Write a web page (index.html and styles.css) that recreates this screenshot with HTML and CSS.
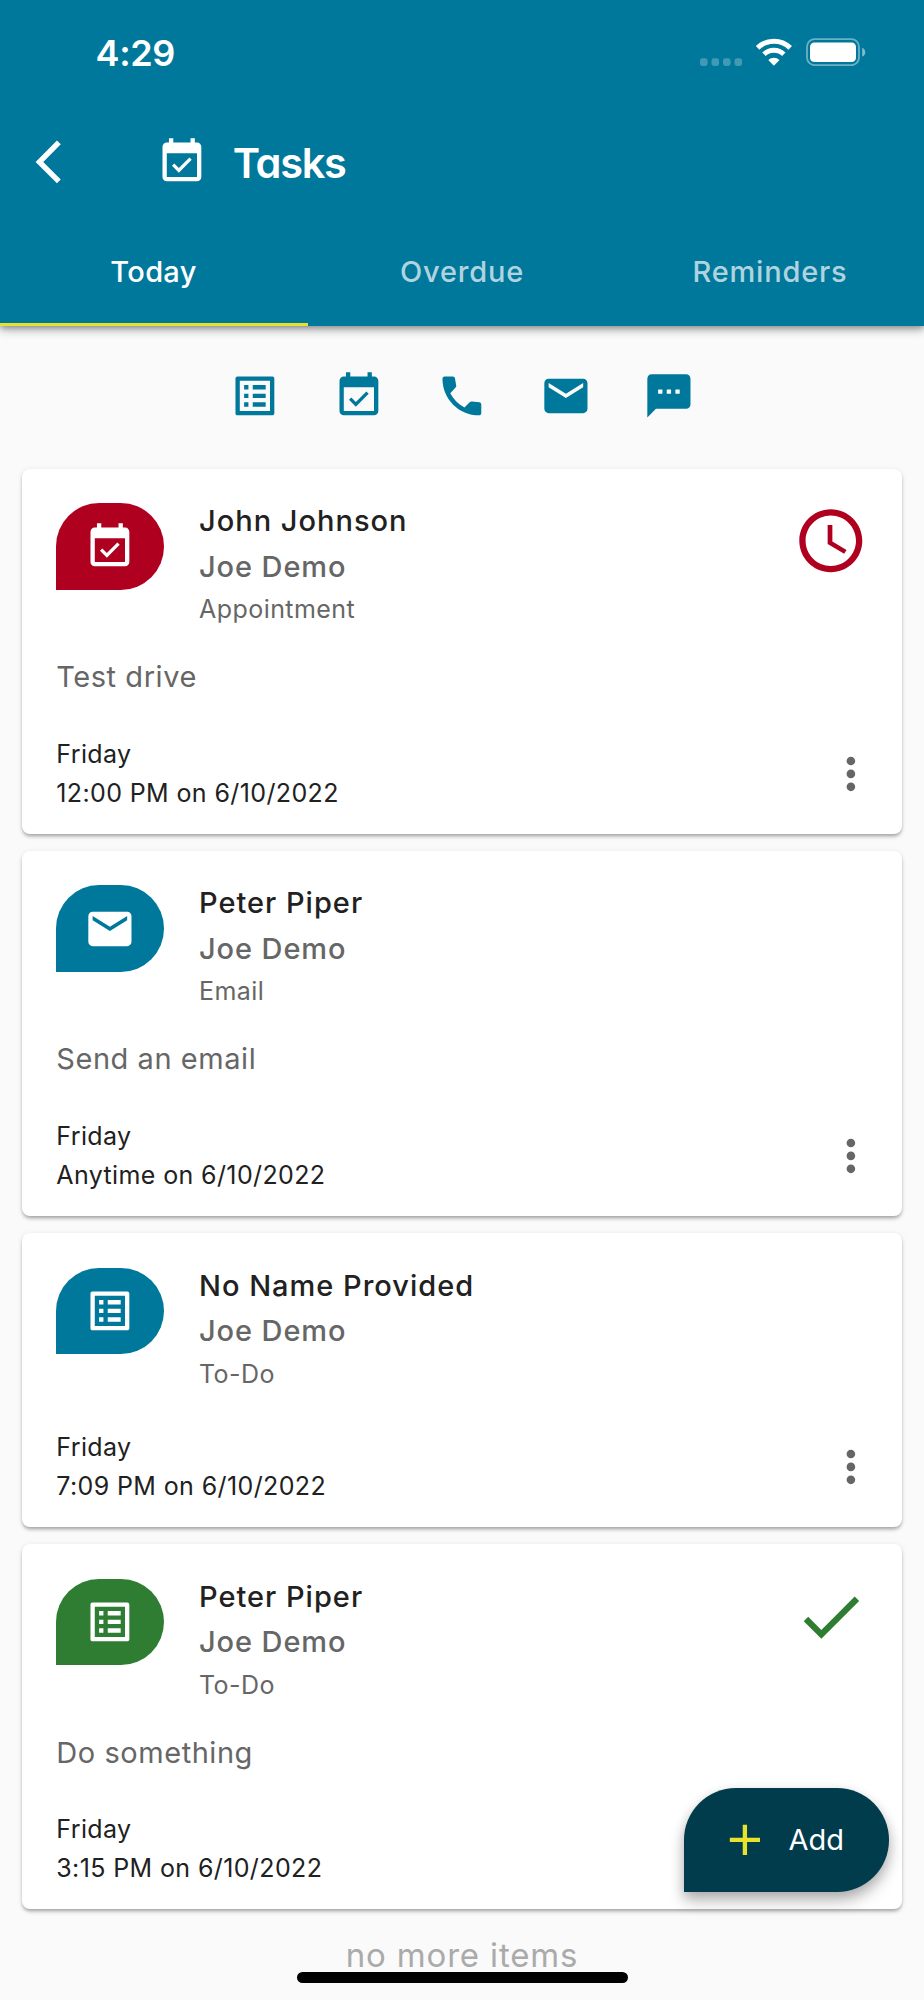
FILE: index.html
```html
<!DOCTYPE html>
<html lang="en">
<head>
<meta charset="utf-8">
<title>Tasks</title>
<link rel="stylesheet" href="styles.css">
</head>
<body>
<svg class="sprite" aria-hidden="true">
  <symbol id="i-event" viewBox="0 0 24 24"><path d="M16.53 11.06L15.47 10l-4.88 4.88-2.12-2.12-1.06 1.06L10.59 17l5.94-5.94zM19 3h-1V1h-2v2H8V1H6v2H5c-1.11 0-1.99.9-1.99 2L3 19c0 1.1.89 2 2 2h14c1.1 0 2-.9 2-2V5c0-1.1-.9-2-2-2zm0 16H5V8h14v11z"/></symbol>
  <symbol id="i-list" viewBox="0 0 24 24"><path d="M19 5v14H5V5h14m1.1-2H3.9c-.5 0-.9.4-.9.9v16.2c0 .4.4.9.9.9h16.2c.4 0 .9-.5.9-.9V3.9c0-.5-.5-.9-.9-.9zM11 7h6v2h-6V7zm0 4h6v2h-6v-2zm0 4h6v2h-6zM7 7h2v2H7zm0 4h2v2H7zm0 4h2v2H7z"/></symbol>
  <symbol id="i-phone" viewBox="0 0 24 24"><path d="M3.99 3H7.8c.5 0 .9.35.97.84l.6 3.3c.06.35-.05.7-.3.95L6.62 10.79c1.44 2.83 3.76 5.14 6.59 6.59l2.5-2.5c.25-.25.6-.36.95-.3l3.45.4c.5.07.87.5.87 1V20c0 .55-.45 1-1 1C10.6 21 3 13.39 3 4c0-.55.45-1 .99-1z"/></symbol>
  <symbol id="i-mail" viewBox="0 0 24 24"><path d="M20 4H4c-1.1 0-1.99.9-1.99 2L2 18c0 1.1.9 2 2 2h16c1.1 0 2-.9 2-2V6c0-1.1-.9-2-2-2zm0 4l-8 5-8-5V6l8 5 8-5v2z"/></symbol>
  <symbol id="i-sms" viewBox="0 0 24 24"><path d="M20 2H4c-1.1 0-1.99.9-1.99 2L2 22l4-4h14c1.1 0 2-.9 2-2V4c0-1.1-.9-2-2-2zM9 11H7V9h2v2zm4 0h-2V9h2v2zm4 0h-2V9h2v2z"/></symbol>
  <symbol id="i-more" viewBox="0 0 24 24"><path d="M12 8c1.1 0 2-.9 2-2s-.9-2-2-2-2 .9-2 2 .9 2 2 2zm0 2c-1.1 0-2 .9-2 2s.9 2 2 2 2-.9 2-2-.9-2-2-2zm0 6c-1.1 0-2 .9-2 2s.9 2 2 2 2-.9 2-2-.9-2-2-2z"/></symbol>
  <symbol id="i-clock" viewBox="0 0 24 24"><path d="M11.99 2C6.47 2 2 6.48 2 12s4.47 10 9.99 10C17.52 22 22 17.52 22 12S17.52 2 11.99 2zM12 20c-4.42 0-8-3.58-8-8s3.58-8 8-8 8 3.58 8 8-3.58 8-8 8zm.5-13H11v6l5.25 3.15.75-1.23-4.5-2.67z"/></symbol>
  <symbol id="i-check" viewBox="0 0 24 24"><path d="M9 16.17L4.83 12l-1.42 1.41L9 19 21 7l-1.41-1.41z"/></symbol>
  <symbol id="i-back" viewBox="0 0 24 24"><path d="M17.51 3.87L15.73 2.1 5.84 12l9.9 9.9 1.77-1.77L9.38 12z"/></symbol>
  <symbol id="i-add" viewBox="0 0 24 24"><path d="M19 13h-6v6h-2v-6H5v-2h6V5h2v6h6z"/></symbol>
</svg>

<div class="screen">
  <header class="header">
    <div class="status">
      <span class="time">4:29</span>
      <svg class="status-icons" viewBox="0 0 166 28">
        <g fill="#fff" opacity=".25"><rect x="0" y="20.3" width="7.6" height="7.6" rx="2.4"/><rect x="11.5" y="20.3" width="7.6" height="7.6" rx="2.4"/><rect x="23" y="20.3" width="7.6" height="7.6" rx="2.4"/><rect x="34.5" y="20.3" width="7.6" height="7.6" rx="2.4"/></g>
        <g fill="none" stroke="#fff" stroke-width="5"><path d="M57.6 9.9a23.2 23.2 0 0 1 32.6 0"/><path d="M64 16.3a14.2 14.2 0 0 1 19.8 0"/></g>
        <path fill="#fff" d="M73.9 27.8l-5.6-5.7a8 8 0 0 1 11.2 0z"/>
        <rect x="107" y="1.2" width="52" height="26" rx="7.6" fill="none" stroke="#fff" stroke-width="1.8" opacity=".42"/>
        <rect x="110" y="4.5" width="46" height="19.6" rx="4.4" fill="#fff"/>
        <path d="M162.2 9.8q3 1.3 3 4.4t-3 4.4z" fill="#fff" opacity=".5"/>
      </svg>
    </div>
    <div class="appbar">
      <svg class="icon"><use href="#i-back"/></svg>
      <svg class="icon appbar-icon"><use href="#i-event"/></svg>
      <h1 class="title">Tasks</h1>
    </div>
    <nav class="tabs">
      <span class="tab active">Today</span>
      <span class="tab">Overdue</span>
      <span class="tab">Reminders</span>
    </nav>
  </header>

  <div class="filters">
    <svg class="icon"><use href="#i-list"/></svg>
    <svg class="icon"><use href="#i-event"/></svg>
    <svg class="icon"><use href="#i-phone"/></svg>
    <svg class="icon"><use href="#i-mail"/></svg>
    <svg class="icon"><use href="#i-sms"/></svg>
  </div>

  <main class="list">
    <article class="card">
      <div class="card-head">
        <div class="badge red"><svg class="icon"><use href="#i-event"/></svg></div>
        <div class="who"><div class="name">John Johnson</div><div class="owner">Joe Demo</div><div class="type">Appointment</div></div>
        <svg class="state overdue"><use href="#i-clock"/></svg>
      </div>
      <div class="desc">Test drive</div>
      <div class="card-foot"><div class="when"><div>Friday</div><div>12:00 PM on 6/10/2022</div></div><svg class="icon more"><use href="#i-more"/></svg></div>
    </article>
    <article class="card">
      <div class="card-head">
        <div class="badge"><svg class="icon"><use href="#i-mail"/></svg></div>
        <div class="who"><div class="name">Peter Piper</div><div class="owner">Joe Demo</div><div class="type">Email</div></div>
      </div>
      <div class="desc">Send an email</div>
      <div class="card-foot"><div class="when"><div>Friday</div><div>Anytime on 6/10/2022</div></div><svg class="icon more"><use href="#i-more"/></svg></div>
    </article>
    <article class="card">
      <div class="card-head">
        <div class="badge"><svg class="icon"><use href="#i-list"/></svg></div>
        <div class="who"><div class="name">No Name Provided</div><div class="owner">Joe Demo</div><div class="type">To-Do</div></div>
      </div>
      <div class="card-foot"><div class="when"><div>Friday</div><div>7:09 PM on 6/10/2022</div></div><svg class="icon more"><use href="#i-more"/></svg></div>
    </article>
    <article class="card">
      <div class="card-head">
        <div class="badge green"><svg class="icon"><use href="#i-list"/></svg></div>
        <div class="who"><div class="name">Peter Piper</div><div class="owner">Joe Demo</div><div class="type">To-Do</div></div>
        <svg class="state done"><use href="#i-check"/></svg>
      </div>
      <div class="desc">Do something</div>
      <div class="card-foot"><div class="when"><div>Friday</div><div>3:15 PM on 6/10/2022</div></div><svg class="icon more"><use href="#i-more"/></svg></div>
    </article>
  </main>
  <p class="end">no more items</p>

  <button class="fab"><svg class="icon"><use href="#i-add"/></svg><span>Add</span></button>
  <div class="home"></div>
</div>
</body>
</html>
```
FILE: styles.css
```css
* { box-sizing: border-box; }
body { margin: 0; background: #fafafa; font-family: Inter, "Liberation Sans", sans-serif; }
.sprite { position: absolute; width: 0; height: 0; }
.screen { position: relative; width: 924px; height: 2000px; overflow: hidden; background: #fafafa; }
.icon { display: block; flex: none; width: 51.8px; height: 51.8px; fill: currentColor; }

.header { height: 326px; display: flex; flex-direction: column; background: #00789b; color: #fff; box-shadow: 0 4px 9px rgba(0,0,0,.3), 0 2px 5px rgba(0,0,0,.2); }
.status { height: 106px; display: flex; justify-content: space-between; align-items: flex-start; padding: 38px 58px 0 95.6px; }
.time { font-size: 36px; line-height: 30px; font-weight: 600; letter-spacing: -.4px; }
.status-icons { width: 166px; height: 28px; }
.appbar { height: 112.6px; display: flex; align-items: center; padding: 0 22.6px; }
.appbar-icon { margin-left: 81.5px; }
.title { margin: 2px 0 0 25px; font-size: 41.5px; line-height: 50px; font-weight: 600; letter-spacing: -1.3px; font-feature-settings: "cv11"; }
.tabs { flex: 1; display: grid; grid-template-columns: repeat(3, 1fr); }
.tab { display: flex; justify-content: center; align-items: center; padding-top: 1px; border-bottom: 3px solid transparent; font-size: 29px; font-weight: 500; letter-spacing: .8px; color: rgba(255,255,255,.7); }
.tab.active { padding-right: 1px; letter-spacing: .3px; color: #fff; border-color: #e6e22e; }

.filters { height: 143.2px; display: flex; justify-content: center; align-items: flex-start; gap: 51.8px; padding-top: 43.6px; color: #00789b; }

.list { display: flex; flex-direction: column; gap: 17.4px; padding: 0 22px; }
.card { padding: 29px 33.7px 21px 34.3px; border-radius: 8px; background: #fff; box-shadow: 0 4px 5px -2px rgba(0,0,0,.2), 0 2px 3px rgba(0,0,0,.16), 0 1px 6px rgba(0,0,0,.08); }
.card-head { display: flex; align-items: flex-start; }
.badge { display: flex; justify-content: center; align-items: center; width: 108px; height: 86.4px; margin-top: 5.2px; border-radius: 43.2px 43.2px 43.2px 0; background: #00789b; color: #fff; }
.badge.red { background: #b00020; }
.badge.green { background: #2e7d32; }
.who { flex: 1; padding: .2px 0 0 34.7px; }
.name, .owner { font-size: 29px; line-height: 45.5px; font-weight: 500; letter-spacing: 1px; color: #212121; }
.owner { letter-spacing: .9px; color: #666; }
.type { margin-top: 1px; font-size: 25px; line-height: 38px; letter-spacing: .45px; color: #666; }
.state { width: 75.6px; height: 75.6px; margin-top: 5.2px; fill: currentColor; }
.overdue { color: #b00020; }
.done { color: #2e7d32; }
.desc { margin-top: 26px; font-size: 29px; line-height: 45px; letter-spacing: .55px; color: #666; }
.card-foot { display: flex; justify-content: space-between; align-items: center; margin-top: 35.5px; }
.when { font-size: 25px; line-height: 39px; letter-spacing: .38px; color: #212121; }
.more { margin-right: -8px; color: #666; }

.end { margin: 26px 0 0; text-align: center; font-size: 33px; line-height: 40px; letter-spacing: .85px; color: #aaa; }

.fab { position: absolute; left: 684.3px; top: 1788px; width: 205px; height: 103.6px; display: flex; align-items: center; gap: 18px; padding: 0 0 0 34.5px; border: 0; border-radius: 51.8px 51.8px 51.8px 0; background: #003c4c; color: #e6e22e; box-shadow: 0 10px 16px rgba(0,0,0,.2), 0 4px 12px rgba(0,0,0,.18); font: 400 29px Inter, "Liberation Sans", sans-serif; }
.fab span { color: #fff; }
.home { position: absolute; left: 297px; top: 1972px; width: 330.5px; height: 10.7px; border-radius: 6px; background: #000; }
```
